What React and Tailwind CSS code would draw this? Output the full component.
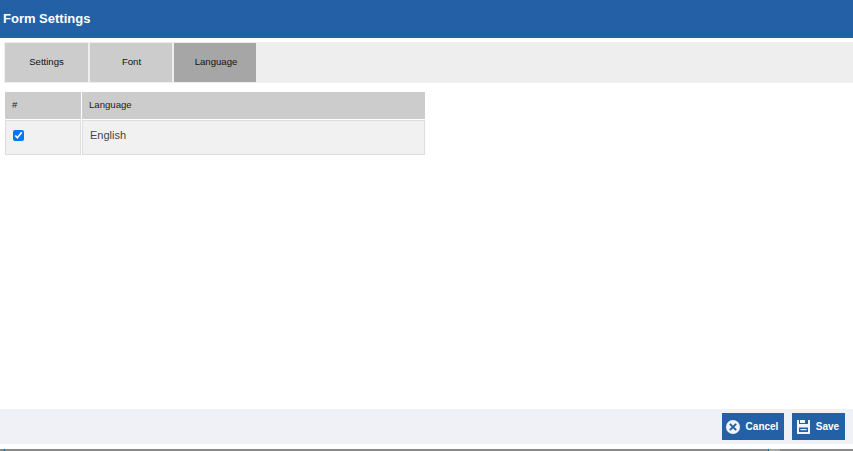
import React from "react";

function CancelIcon() {
  return (
    <svg width="14" height="14" viewBox="0 0 14 14" className="shrink-0">
      <circle cx="7" cy="7" r="7" fill="#f0f4fa" />
      <path d="M4.6 4.6 9.4 9.4M9.4 4.6 4.6 9.4" stroke="#2360a5" strokeWidth="2" strokeLinecap="square" />
    </svg>
  );
}

function SaveIcon() {
  return (
    <svg width="13" height="14" viewBox="0 0 13 14" className="shrink-0">
      <path d="M0 0h2v4h9V0h2v14H0z" fill="#f0f4fa" />
      <rect x="3" y="0" width="5" height="3" fill="#f0f4fa" />
      <rect x="2" y="7.5" width="9" height="4.5" fill="#2360a5" />
      <rect x="3.5" y="9" width="6" height="1.2" fill="#f0f4fa" />
    </svg>
  );
}

export default function App() {
  return (
    <div className="w-[853px] h-[451px] overflow-hidden bg-white flex flex-col font-['Liberation_Sans',Arial,sans-serif]">
      <header className="h-[38px] shrink-0 bg-[#2360a5] flex items-center pl-[3px] text-white text-[13px] font-bold">
        Form Settings
      </header>
      <nav className="mt-1 ml-1 h-[41px] shrink-0 bg-[#eeeeee] flex gap-0.5 p-px text-[9.6px] text-[#111111]">
        <div className="w-[83px] bg-[#cccccc] flex items-center justify-center">Settings</div>
        <div className="w-[82px] pl-px bg-[#cccccc] flex items-center justify-center">Font</div>
        <div className="w-[82px] pl-0.5 bg-[#a6a6a6] flex items-center justify-center">Language</div>
      </nav>
      <div className="mt-[9px] ml-[5px] w-[420px] shrink-0">
        <div className="flex gap-px h-[27px] text-[9.6px] text-[#222222]">
          <div className="w-[76px] bg-[#cccccc] flex items-center pl-[7px]">#</div>
          <div className="flex-1 bg-[#cccccc] flex items-center pl-[7px]">Language</div>
        </div>
        <div className="mt-px flex h-[35px] gap-px">
          <div className="w-[76px] bg-[#f1f1f1] border border-[#dddddd] flex items-center pl-[7px] pb-1">
            <input type="checkbox" defaultChecked className="w-[11px] h-[11px] m-0 accent-[#0075ff]" />
          </div>
          <div className="flex-1 bg-[#f1f1f1] border border-[#dddddd] flex items-center pl-[7px] pb-1 text-[11px] text-[#444444]">
            English
          </div>
        </div>
      </div>
      <div className="flex-1" />
      <footer className="h-[35px] shrink-0 bg-[#f0f1f6] flex items-center justify-end gap-2 pr-2">
        <button className="w-[62px] h-[27px] bg-[#2360a5] text-white text-[10px] font-bold flex items-center justify-center gap-[6px] pr-0.5">
          <CancelIcon />
          Cancel
        </button>
        <button className="w-[53px] h-[27px] bg-[#2360a5] text-white text-[10px] font-bold flex items-center justify-center gap-[6px] pr-px">
          <SaveIcon />
          Save
        </button>
      </footer>
      <div className="h-[5px] shrink-0" />
      <div className="h-0.5 shrink-0 bg-[#8a8a8a] flex">
        <div className="ml-1 w-px bg-[#2360a5]" />
        <div className="ml-[763px] w-px bg-[#2360a5]" />
        <div className="w-[11px] bg-[#a8a8a8]" />
      </div>
    </div>
  );
}
